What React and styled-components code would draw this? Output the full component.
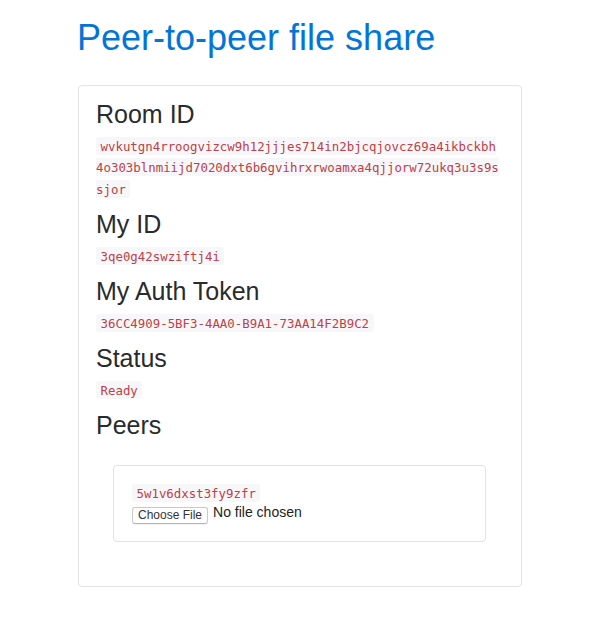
import React from 'react'
import styled, { createGlobalStyle } from 'styled-components'

const GlobalStyle = createGlobalStyle`
  html, body {
    margin: 0;
    padding: 0;
    background: #fff;
  }
  body {
    font-family: "Liberation Sans", Arial, sans-serif;
    font-size: 14.4px;
    line-height: 1.5;
    color: #292b2c;
  }
`

const Container = styled.div`
  width: 444px;
  margin: 0 auto;
  padding-top: 18px;
`

const Title = styled.h1`
  margin: 0 0 27px -1px;
  font-size: 36px;
  font-weight: 400;
  line-height: 1.1;
  color: #0275d8;
`

const Card = styled.div`
  border: 1px solid #e3e3e3;
  border-radius: 4px;
  padding: 15px 19px 16px 17px;
`

const Heading = styled.h3`
  margin: 0 0 7px;
  font-size: 25px;
  font-weight: 400;
  line-height: 1.1;
  color: #292b2c;
`

const Line = styled.div`
  margin: 0 0 ${p => (p.$last ? 0 : 11)}px;
  font-family: "DejaVu Sans Mono", Menlo, monospace;
  font-size: 12.4px;
  line-height: 21.6px;
`

const Code = styled.code`
  font-family: "DejaVu Sans Mono", Menlo, monospace;
  font-size: 12.4px;
  padding: 1.5px 4.5px;
  border-radius: 3px;
  background: #f7f7f9;
  color: #bd4147;
  word-break: break-all;
`

const PeerList = styled.div`
  padding: 18px 16px 28px 17px;
`

const PeerCard = styled.div`
  border: 1px solid #e3e3e3;
  border-radius: 4px;
  padding: 17px 18px 15px;
`

const FileRow = styled.div`
  display: flex;
  align-items: flex-start;
  gap: 5px;
  padding: 2.5px 0 2px;
`

const FileButton = styled.button`
  box-sizing: border-box;
  height: 17px;
  padding: 0 5px;
  border: 1px solid #c9c9c9;
  border-bottom-color: #b5b5b5;
  border-radius: 3px;
  background: #fff;
  font-family: "Liberation Sans", Arial, sans-serif;
  font-size: 12px;
  line-height: 15px;
  color: #333;
  box-shadow: 0 1px 0 rgba(0, 0, 0, 0.05);
`

const FileLabel = styled.span`
  margin-top: -1.5px;
  font-size: 14px;
  line-height: 14px;
  color: #222;
`

const fields = [
  { label: 'Room ID', value: 'wvkutgn4rroogvizcw9h12jjjes714in2bjcqjovcz69a4ikbckbh4o303blnmiijd7020dxt6b6gvihrxrwoamxa4qjjorw72ukq3u3s9ssjor' },
  { label: 'My ID', value: '3qe0g42swziftj4i' },
  { label: 'My Auth Token', value: '36CC4909-5BF3-4AA0-B9A1-73AA14F2B9C2' },
  { label: 'Status', value: 'Ready' },
]

const peers = ['5w1v6dxst3fy9zfr']

export default function App() {
  return (
    <>
      <GlobalStyle />
      <Container>
        <Title>Peer-to-peer file share</Title>
        <Card>
          {fields.map(f => (
            <React.Fragment key={f.label}>
              <Heading>{f.label}</Heading>
              <Line><Code>{f.value}</Code></Line>
            </React.Fragment>
          ))}
          <Heading>Peers</Heading>
          <PeerList>
            {peers.map(id => (
              <PeerCard key={id}>
                <Line $last><Code>{id}</Code></Line>
                <FileRow>
                  <FileButton type="button">Choose File</FileButton>
                  <FileLabel>No file chosen</FileLabel>
                </FileRow>
              </PeerCard>
            ))}
          </PeerList>
        </Card>
      </Container>
    </>
  )
}
